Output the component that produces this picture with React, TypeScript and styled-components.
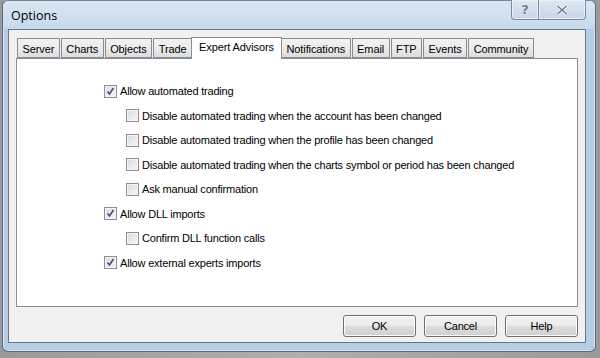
import React from "react";
import styled, { createGlobalStyle } from "styled-components";

const GlobalStyle = createGlobalStyle`
  html, body {
    margin: 0;
    padding: 0;
    background: #a4a4a4;
  }
  body {
    font-family: "Liberation Sans", Arial, sans-serif;
    font-size: 11px;
    color: #000;
  }
`;

const tabs = [
  "Server",
  "Charts",
  "Objects",
  "Trade",
  "Expert Advisors",
  "Notifications",
  "Email",
  "FTP",
  "Events",
  "Community",
];

interface Option {
  label: string;
  checked: boolean;
  level: number;
}

const options: Option[] = [
  { label: "Allow automated trading", checked: true, level: 0 },
  { label: "Disable automated trading when the account has been changed", checked: false, level: 1 },
  { label: "Disable automated trading when the profile has been changed", checked: false, level: 1 },
  { label: "Disable automated trading when the charts symbol or period has been changed", checked: false, level: 1 },
  { label: "Ask manual confirmation", checked: false, level: 1 },
  { label: "Allow DLL imports", checked: true, level: 0 },
  { label: "Confirm DLL function calls", checked: false, level: 1 },
  { label: "Allow external experts imports", checked: true, level: 0 },
];

function CheckBox({ checked }: { checked: boolean }) {
  return (
    <Box>
      {checked ? (
        <svg width="11" height="11" viewBox="0 0 11 11">
          <path
            d="M2.5 5.5 L4.5 8 L8.5 2"
            fill="none"
            stroke="#3d4f84"
            strokeWidth="1.6"
          />
        </svg>
      ) : null}
    </Box>
  );
}

export default function App() {
  return (
    <Page>
      <GlobalStyle />
      <Window>
        <TitleBar>
          <Title>Options</Title>
          <Captions>
            <CaptionButton $w={28} $first>
              ?
            </CaptionButton>
            <CaptionButton $w={47}>
              <svg width="12" height="10" viewBox="0 0 12 10">
                <path
                  d="M1.5 1 L10.5 9 M10.5 1 L1.5 9"
                  stroke="#f4f7fb"
                  strokeWidth="3.4"
                />
                <path
                  d="M1.5 1 L10.5 9 M10.5 1 L1.5 9"
                  stroke="#6f7f93"
                  strokeWidth="1.6"
                />
              </svg>
            </CaptionButton>
          </Captions>
        </TitleBar>
        <Client>
          <TabRow>
            {tabs.map((t) => (
              <Tab key={t} $active={t === "Expert Advisors"}>
                {t}
              </Tab>
            ))}
          </TabRow>
          <Panel>
            {options.map((o) => (
              <Row key={o.label} $level={o.level}>
                <CheckBox checked={o.checked} />
                <Label>{o.label}</Label>
              </Row>
            ))}
          </Panel>
          <Footer>
            <Button>OK</Button>
            <Button>Cancel</Button>
            <Button>Help</Button>
          </Footer>
        </Client>
      </Window>
    </Page>
  );
}

const Page = styled.div`
  width: 600px;
  height: 358px;
  padding: 0 4px 0 2px;
  box-sizing: border-box;
  background: linear-gradient(to right, #9a9a9a, #b0b0b0 50%, #9a9a9a);
`;

const Window = styled.div`
  width: 594px;
  height: 352px;
  box-sizing: border-box;
  border: 1px solid #5f6b7b;
  border-top-color: #7a8797;
  border-radius: 6px;
  background: #b6cde6;
  box-shadow: inset 0 0 0 1px #d8e5f3;
  display: flex;
  flex-direction: column;
`;

const TitleBar = styled.div`
  height: 28px;
  display: flex;
  align-items: flex-start;
  justify-content: space-between;
  padding: 0 9px 0 8px;
  border-radius: 6px 6px 0 0;
  background: linear-gradient(#dbe6f3, #c7d9ed);
`;

const Title = styled.div`
  font-family: "Open Sans", "Liberation Sans", sans-serif;
  font-size: 12.5px;
  line-height: 30px;
  color: #000;
`;

const Captions = styled.div`
  display: flex;
  margin-top: -1px;
`;

const CaptionButton = styled.div<{ $w: number; $first?: boolean }>`
  width: ${(p) => p.$w}px;
  height: 20px;
  box-sizing: border-box;
  border: 1px solid #7b8a9e;
  border-top: none;
  border-left: ${(p) => (p.$first ? "1px solid #7b8a9e" : "none")};
  border-radius: ${(p) => (p.$first ? "0 0 0 4px" : "0 0 4px 0")};
  background: linear-gradient(#dfe8f3, #c6d6e9);
  box-shadow: inset 0 0 0 1px #e9f0f8;
  display: flex;
  align-items: center;
  justify-content: center;
  font-family: "DejaVu Sans", sans-serif;
  font-weight: bold;
  font-size: 13px;
  color: #6f7f93;
  text-shadow: 0 0 2px #fff;
`;

const Client = styled.div`
  flex: 1;
  margin: 0 9px 8px 5px;
  border: 1px solid #6c7786;
  background: #f0f0f0;
  display: flex;
  flex-direction: column;
  padding: 0 7px 0 7px;
`;

const TabRow = styled.div`
  display: flex;
  align-items: flex-end;
  height: 28px;
  padding-left: 1px;
  position: relative;
  z-index: 1;
`;

const Tab = styled.div<{ $active: boolean }>`
  height: ${(p) => (p.$active ? "22px" : "20px")};
  box-sizing: border-box;
  margin: ${(p) => (p.$active ? "0 -1px -1px -2px" : "0 1px 0 0")};
  padding: ${(p) => (p.$active ? "3px 7px 0" : "4px 4.5px 0")};
  border: 1px solid #898c95;
  border-bottom: ${(p) => (p.$active ? "none" : "1px solid #898c95")};
  background: ${(p) =>
    p.$active ? "#fff" : "linear-gradient(#f2f2f2, #ebebeb 50%, #dddddd)"};
  white-space: nowrap;
  letter-spacing: -0.1px;
`;

const Panel = styled.div`
  height: 249px;
  box-sizing: border-box;
  border: 1px solid #898c95;
  background: #fff;
  padding: 20px 0 0 87px;
  display: flex;
  flex-direction: column;
`;

const Row = styled.div<{ $level: number }>`
  height: 24.5px;
  display: flex;
  align-items: center;
  padding-left: ${(p) => p.$level * 22}px;
`;

const Box = styled.div`
  width: 13px;
  height: 13px;
  box-sizing: border-box;
  border: 1px solid #8e8f8f;
  background: linear-gradient(135deg, #dcdcdc, #f6f6f6);
  box-shadow: inset 0 0 0 1px #f4f4f4;
  display: flex;
  align-items: center;
  justify-content: center;
  margin-right: 3px;
`;

const Label = styled.span`
  letter-spacing: -0.2px;
  white-space: nowrap;
`;

const Footer = styled.div`
  display: flex;
  justify-content: flex-end;
  gap: 8px;
  padding: 8px 0 0;
`;

const Button = styled.div`
  width: 73px;
  height: 22px;
  box-sizing: border-box;
  border: 1px solid #707070;
  border-radius: 3px;
  background: linear-gradient(#f2f2f2, #ebebeb 50%, #dddddd 51%, #cfcfcf);
  box-shadow: inset 0 0 0 1px #fcfcfc;
  display: flex;
  align-items: center;
  justify-content: center;
  letter-spacing: -0.2px;
`;
